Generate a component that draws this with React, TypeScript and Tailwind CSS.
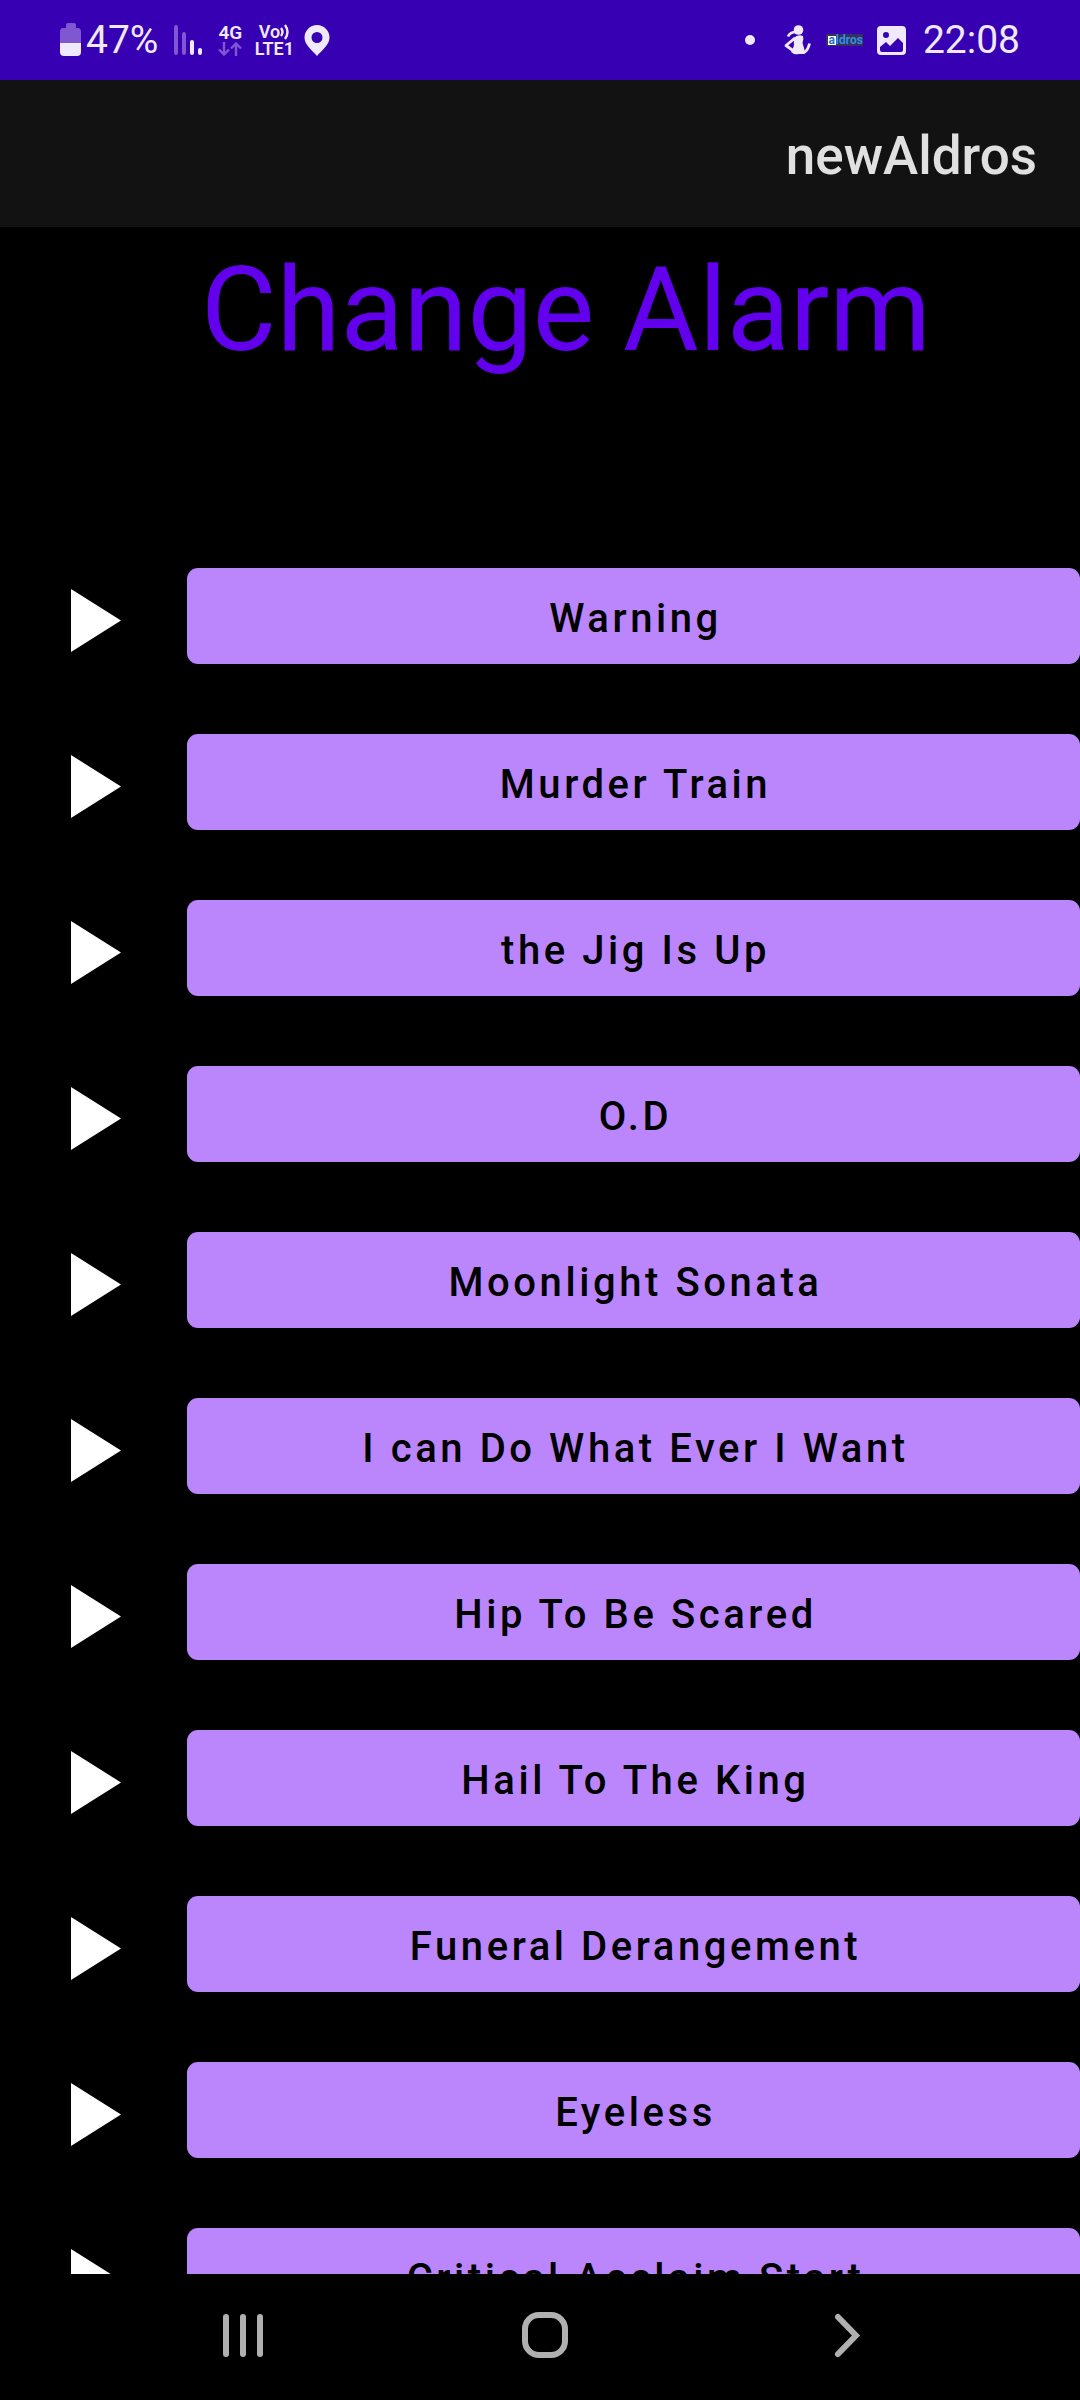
const tracks = [
  'Warning',
  'Murder Train',
  'the Jig Is Up',
  'O.D',
  'Moonlight Sonata',
  'I can Do What Ever I Want',
  'Hip To Be Scared',
  'Hail To The King',
  'Funeral Derangement',
  'Eyeless',
  'Critical Acclaim Start',
];

function StatusBar() {
  return (
    <header className="flex h-20 shrink-0 items-center justify-between bg-[#3700b3] px-[60px] text-[#efe9fb]">
      <div className="flex items-center">
        <svg className="h-[34px] w-[22px]" viewBox="0 0 22 34" aria-label="Battery">
          <path d="M6 5V2q0-2 2-2h6q2 0 2 2v3h2q3 0 3 4v11H0V9q0-4 3-4z" fill="#7f57d0" />
          <path d="M0 20h21v9q0 4-4 4H4q-4 0-4-4z" fill="currentColor" />
        </svg>
        <span className="ml-1 text-[39px] leading-none">47%</span>
        <svg className="ml-4 h-[30px] w-[28px]" viewBox="0 0 28 30" strokeWidth="4" strokeLinecap="round" aria-label="Signal">
          <path d="M2 2v26M10 9v19" stroke="#7f57d0" />
          <path d="M18 17v11M26 25v3" stroke="currentColor" />
        </svg>
        <div className="ml-4 flex w-[24px] flex-col items-center">
          <span className="text-[19px] leading-[18px] font-semibold">4G</span>
          <svg className="h-[14px] w-[24px]" viewBox="0 0 24 14" fill="none" stroke="#7f57d0" strokeWidth="2.4">
            <path d="M6 0v12M1 7.500l5 5 5-5M18 14V2M13 6.500l5-5 5 5" />
          </svg>
        </div>
        <div className="ml-3 flex w-[40px] flex-col items-center text-[18px] leading-[17px] font-semibold">
          <span className="flex items-center">
            Vo
            <svg className="h-4 w-[10px]" viewBox="0 0 10 16" fill="none" stroke="currentColor" strokeWidth="2.400">
              <path d="M1 4q3 4 0 8M5 1q5 7 0 14" />
            </svg>
          </span>
          <span>LTE1</span>
        </div>
        <svg className="ml-[10px] h-[31px] w-[26px]" viewBox="0 0 26 31" aria-label="Location">
          <path fillRule="evenodd" d="M13 0a12.500 12.500 0 0 0-12.500 12.500C.5 20 8 25 13 31 18 25 25.500 20 25.500 12.500A12.500 12.500 0 0 0 13 0zm0 7a5.500 5.500 0 1 1 0 11 5.500 5.500 0 0 1 0-11z" fill="currentColor" />
        </svg>
      </div>
      <div className="flex items-center">
        <span className="size-[10px] rounded-full bg-current" />
        <svg className="ml-[29px] h-[30px] w-[27px]" viewBox="0 0 27 30" fill="none" stroke="currentColor" strokeLinejoin="round" aria-label="Activity">
          <circle cx="14.500" cy="5" r="4.800" fill="currentColor" stroke="none" />
          <path d="M12 7Q6 7 4 11.500" strokeWidth="2.600" />
          <path d="M9.500 13Q14 9 19 11q1 3-.5 7l1.500 5 1 4q-4 3-11 2L7 27q3-5 3-8z" fill="currentColor" stroke="none" />
          <path d="M11 13L2 20.500 11 27" strokeWidth="2.800" />
          <path d="M14 27.500h6q4-2 5.500-9" strokeWidth="2.800" />
        </svg>
        <span className="ml-[15px] flex h-3 w-[37px] items-center bg-[#37315c] text-[12px] leading-none font-bold text-[#2f8fe6]">
          <span className="ml-0.5 w-2 bg-white text-center leading-[9px] text-[#1f6fc8]">a</span>ldros
        </span>
        <svg className="ml-[14px] size-[29px]" viewBox="0 0 29 29" aria-label="Picture">
          <path fillRule="evenodd" d="M4 0h21q4 0 4 4v21q0 4-4 4H4q-4 0-4-4V4q0-4 4-4zM3 24q0 2 2 2h19q2 0 2-2v-7l-5-5-8 8-4-4-6 5zM9 6a3 3 0 1 0 0 6 3 3 0 0 0 0-6z" fill="currentColor" />
        </svg>
        <time className="ml-[17px] text-[39px] leading-none">22:08</time>
      </div>
    </header>
  );
}

function TrackRow({ name }: { name: string }) {
  return (
    <li className="flex h-24 shrink-0 items-center">
      <button type="button" aria-label={`Play ${name}`} className="flex h-full w-[187px] shrink-0 items-center pt-2 pl-[71px]">
        <svg className="h-[63px] w-[50px]" viewBox="0 0 50 63">
          <path d="M0 0L50 31.500 0 63z" fill="white" />
        </svg>
      </button>
      <button type="button" className="h-full flex-1 rounded-[11px] bg-[#bb86fc] pt-1.5 pl-1 text-center text-[40px] leading-none font-medium tracking-[0.0893em] text-black">
        {name}
      </button>
    </li>
  );
}

function NavigationBar() {
  return (
    <nav className="grid h-[126px] shrink-0 grid-cols-3 bg-black pr-[82px] pb-0.5 pl-[92px] text-[#b0b0b0]">
      <button type="button" aria-label="Recent apps" className="flex items-center justify-center">
        <svg className="size-12" viewBox="0 0 48 48" stroke="currentColor" strokeWidth="6" strokeLinecap="round">
          <path d="M7 5v37M24 5v37M41 5v37" />
        </svg>
      </button>
      <button type="button" aria-label="Home" className="flex items-center justify-center">
        <svg className="size-12" viewBox="0 0 48 48" fill="none" stroke="currentColor" strokeWidth="6">
          <rect x="4" y="3" width="40" height="40" rx="14" />
        </svg>
      </button>
      <button type="button" aria-label="Back" className="flex items-center justify-center">
        <svg className="size-12" viewBox="0 0 48 48" fill="none" stroke="currentColor" strokeWidth="6" strokeLinecap="round">
          <path d="M15 5l18 18.500L15 42" />
        </svg>
      </button>
    </nav>
  );
}

export default function App() {
  return (
    <div className="flex h-screen flex-col overflow-hidden bg-black font-['Roboto',sans-serif]">
      <StatusBar />
      <div className="flex h-[147px] shrink-0 items-center justify-end bg-[#121212] px-[43px] pt-1.5 text-[53px] font-medium text-[#e0e0e0]">
        newAldros
      </div>
      <main className="min-h-0 flex-1 overflow-hidden">
        <h1 className="pt-[15px] pl-[52px] text-center text-[116px] leading-[136px] text-[#6200ee]">Change Alarm</h1>
        <ul className="mt-[190px] flex flex-col gap-[70px]">
          {tracks.map((name) => (
            <TrackRow key={name} name={name} />
          ))}
        </ul>
      </main>
      <NavigationBar />
    </div>
  );
}
